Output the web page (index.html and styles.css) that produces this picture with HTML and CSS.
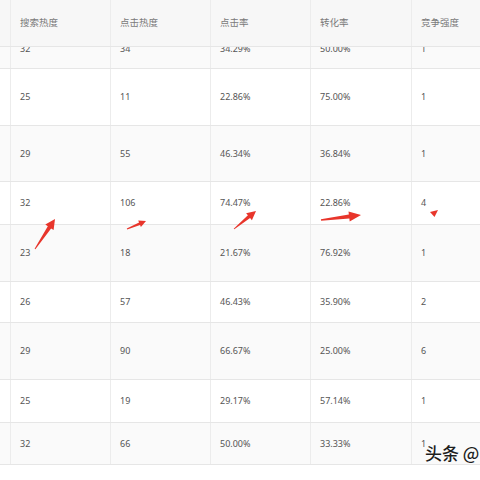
FILE: index.html
```html
<!DOCTYPE html>
<html lang="zh">
<head>
<meta charset="utf-8">
<title>关键词数据</title>
<link rel="stylesheet" href="styles.css">
</head>
<body>
<div class="page">
  <div class="table">
    <div class="row head"><div class="c0"></div><div class="c">搜索热度</div><div class="c">点击热度</div><div class="c">点击率</div><div class="c">转化率</div><div class="c">竞争强度</div></div>
    <div class="row cut alt"><div class="c0"></div><div class="c"><span>32</span></div><div class="c"><span>34</span></div><div class="c"><span>34.29%</span></div><div class="c"><span>50.00%</span></div><div class="c"><span>1</span></div></div>
    <div class="row tall"><div class="c0"></div><div class="c">25</div><div class="c">11</div><div class="c">22.86%</div><div class="c">75.00%</div><div class="c">1</div></div>
    <div class="row tall alt h56"><div class="c0"></div><div class="c">29</div><div class="c">55</div><div class="c">46.34%</div><div class="c">36.84%</div><div class="c">1</div></div>
    <div class="row short"><div class="c0"></div><div class="c">32</div><div class="c">106</div><div class="c">74.47%</div><div class="c">22.86%</div><div class="c">4</div></div>
    <div class="row tall alt"><div class="c0"></div><div class="c">23</div><div class="c">18</div><div class="c">21.67%</div><div class="c">76.92%</div><div class="c">1</div></div>
    <div class="row short h41"><div class="c0"></div><div class="c">26</div><div class="c">57</div><div class="c">46.43%</div><div class="c">35.90%</div><div class="c">2</div></div>
    <div class="row tall alt"><div class="c0"></div><div class="c">29</div><div class="c">90</div><div class="c">66.67%</div><div class="c">25.00%</div><div class="c">6</div></div>
    <div class="row short"><div class="c0"></div><div class="c">25</div><div class="c">19</div><div class="c">29.17%</div><div class="c">57.14%</div><div class="c">1</div></div>
    <div class="row short alt h42"><div class="c0"></div><div class="c">32</div><div class="c">66</div><div class="c">50.00%</div><div class="c">33.33%</div><div class="c">1</div></div>
  </div>
  <svg class="marks" width="480" height="480" viewBox="0 0 480 480" aria-hidden="true">
    <polygon points="35.4,249.3 51.1,228.4 53.6,230.1 55,219 45.3,224.5 47.8,226.2 34.6,248.7"/>
    <polygon points="127.2,229.4 140.05,224.9 140.9,226.9 146,221 138.2,220.5 139.05,222.5 126.8,228.6"/>
    <polygon points="234.3,229.3 250.1,218.1 251.9,220.2 256,211 246.1,213.2 247.9,215.3 233.7,228.7"/>
    <polygon points="321.1,220.7 349.35,218.5 349.7,221.5 361,215 348.5,211.5 348.85,214.5 320.9,219.3"/>
    <polygon points="430,212 438,210 434.5,217"/>
  </svg>
  <div class="watermark">头条 @</div>
</div>
</body>
</html>
```
FILE: styles.css
```css
html, body {
  margin: 0;
  padding: 0;
  background: #fff;
}
.page {
  position: relative;
  width: 480px;
  height: 480px;
  overflow: hidden;
  font-family: "Noto Sans", "Noto Sans CJK SC", sans-serif;
  font-size: 9px;
  color: #555;
}
.table {
  display: flex;
  flex-direction: column;
}
.row {
  display: grid;
  grid-template-columns: 11px 100px 100px 100px 101px 68px;
  border-bottom: 1px solid #e6e6e6;
  background: #fff;
  overflow: hidden;
}
.row.alt { background: #fafafa; }
.row.head {
  height: 46px;
  background: #f7f7f7;
  color: #7a7a7a;
  font-size: 9.5px;
}
.row.cut { height: 21px; }
.row.tall { height: 56px; }
.row.h56 { height: 55px; }
.row.short { height: 42px; }
.row.h41 { height: 40px; }
.row.h42 { height: 41px; }
.c0, .c {
  border-right: 1px solid #ececec;
}
.c {
  display: flex;
  align-items: center;
  padding-left: 9px;
  line-height: 12px;
}
.c:last-child { border-right: none; }
.row.cut .c {
  align-items: flex-start;
}
.row.cut .c span {
  display: block;
  margin-top: -4px;
}
.marks {
  position: absolute;
  left: 0;
  top: 0;
  fill: #e8352b;
}
.watermark {
  position: absolute;
  left: 425px;
  top: 442px;
  font-family: "Noto Sans CJK SC", sans-serif;
  font-size: 17px;
  font-weight: 500;
  line-height: 22px;
  color: #1e1e1e;
  white-space: nowrap;
  text-shadow: 0 0 2px #fff, 0 0 2px #fff;
}
```
